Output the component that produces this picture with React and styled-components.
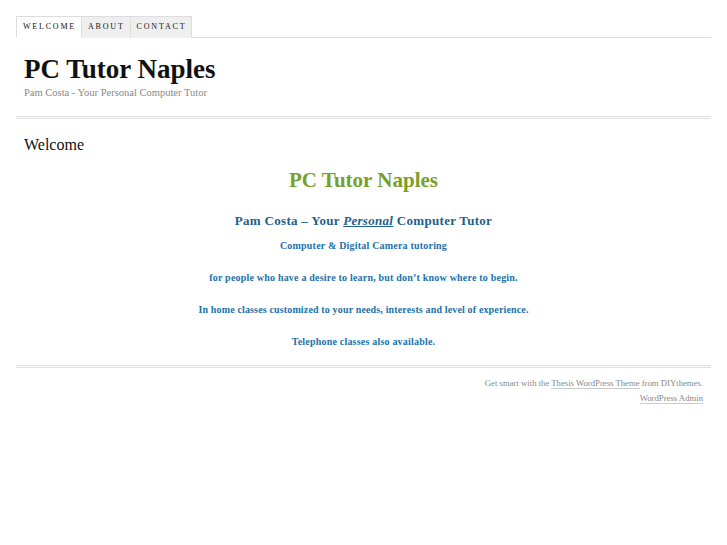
import React from "react";
import styled, { createGlobalStyle } from "styled-components";

const Global = createGlobalStyle`
  html, body { margin: 0; padding: 0; background: #fff; }
  body { font-family: "Liberation Serif", "Times New Roman", serif; color: #111; }
`;

const Page = styled.div`
  padding: 16px 16px 0 16px;
  width: 695px;
`;

const Tabs = styled.ul`
  display: flex;
  list-style: none;
  margin: 0;
  padding: 0;
  border-bottom: 1px solid #ddd;
`;

const Tab = styled.li`
  font-size: 8px;
  letter-spacing: 1.8px;
  text-transform: uppercase;
  color: #111;
  background: ${(p) => (p.$current ? "#fff" : "#efefef")};
  border: 1px solid #ddd;
  border-left-width: ${(p) => (p.$first ? "1px" : "0")};
  border-bottom: ${(p) => (p.$current ? "1px solid #fff" : "0")};
  margin-bottom: -1px;
  padding: 5px 5px 5px 6px;
  line-height: 10px;
`;

const Header = styled.div`
  padding: 16px 8px 16px;
  border-bottom: 3px double #ddd;
`;

const Title = styled.h1`
  margin: 0;
  font-size: 27px;
  font-weight: bold;
  line-height: 30px;
  color: #111;
`;

const Tagline = styled.p`
  margin: 2px 0 0;
  font-size: 10.5px;
  line-height: 14px;
  color: #888;
`;

const Content = styled.div`
  padding: 15px 8px 17px;
  border-bottom: 3px double #ddd;
`;

const PageTitle = styled.h2`
  margin: 0 0 11px;
  font-size: 16px;
  font-weight: normal;
  line-height: 22px;
  color: #111;
`;

const Center = styled.div`
  text-align: center;
  font-weight: bold;
`;

const Big = styled.div`
  font-size: 21px;
  line-height: 26px;
  color: #76a02a;
  margin-bottom: 19px;
`;

const Sub = styled.div`
  font-size: 13px;
  line-height: 18px;
  color: #1e5f8c;
  letter-spacing: 0.3px;
  margin-bottom: 9px;
  em { text-decoration: underline; }
`;

const Line = styled.p`
  margin: 0 0 19px;
  font-size: 10px;
  line-height: 13px;
  color: #2272a8;
  letter-spacing: ${(p) => p.$ls || "0.2px"};
  &:last-child { margin-bottom: 0; }
`;

const Footer = styled.div`
  padding: 8px 8px 6px;
  text-align: right;
  font-size: 8.7px;
  line-height: 15px;
  color: #888;
`;

const FootLink = styled.a`
  color: #888;
  text-decoration: none;
  border-bottom: 1px solid #ccc;
`;

export default function App() {
  return (
    <>
      <Global />
      <Page>
        <Tabs>
          <Tab $current $first>Welcome</Tab>
          <Tab>About</Tab>
          <Tab>Contact</Tab>
        </Tabs>
        <Header>
          <Title>PC Tutor Naples</Title>
          <Tagline>Pam Costa - Your Personal Computer Tutor</Tagline>
        </Header>
        <Content>
          <PageTitle>Welcome</PageTitle>
          <Center>
            <Big>PC Tutor Naples</Big>
            <Sub>
              Pam Costa – Your <em>Personal</em> Computer Tutor
            </Sub>
            <Line $ls="0.2px">Computer &amp; Digital Camera tutoring</Line>
            <Line>for people who have a desire to learn, but don’t know where to begin.</Line>
            <Line $ls="0.15px">In home classes customized to your needs, interests and level of experience.</Line>
            <Line>Telephone classes also available.</Line>
          </Center>
        </Content>
        <Footer>
          <div>
            Get smart with the <FootLink href="#">Thesis WordPress Theme</FootLink> from DIYthemes.
          </div>
          <div>
            <FootLink href="#">WordPress Admin</FootLink>
          </div>
        </Footer>
      </Page>
    </>
  );
}
